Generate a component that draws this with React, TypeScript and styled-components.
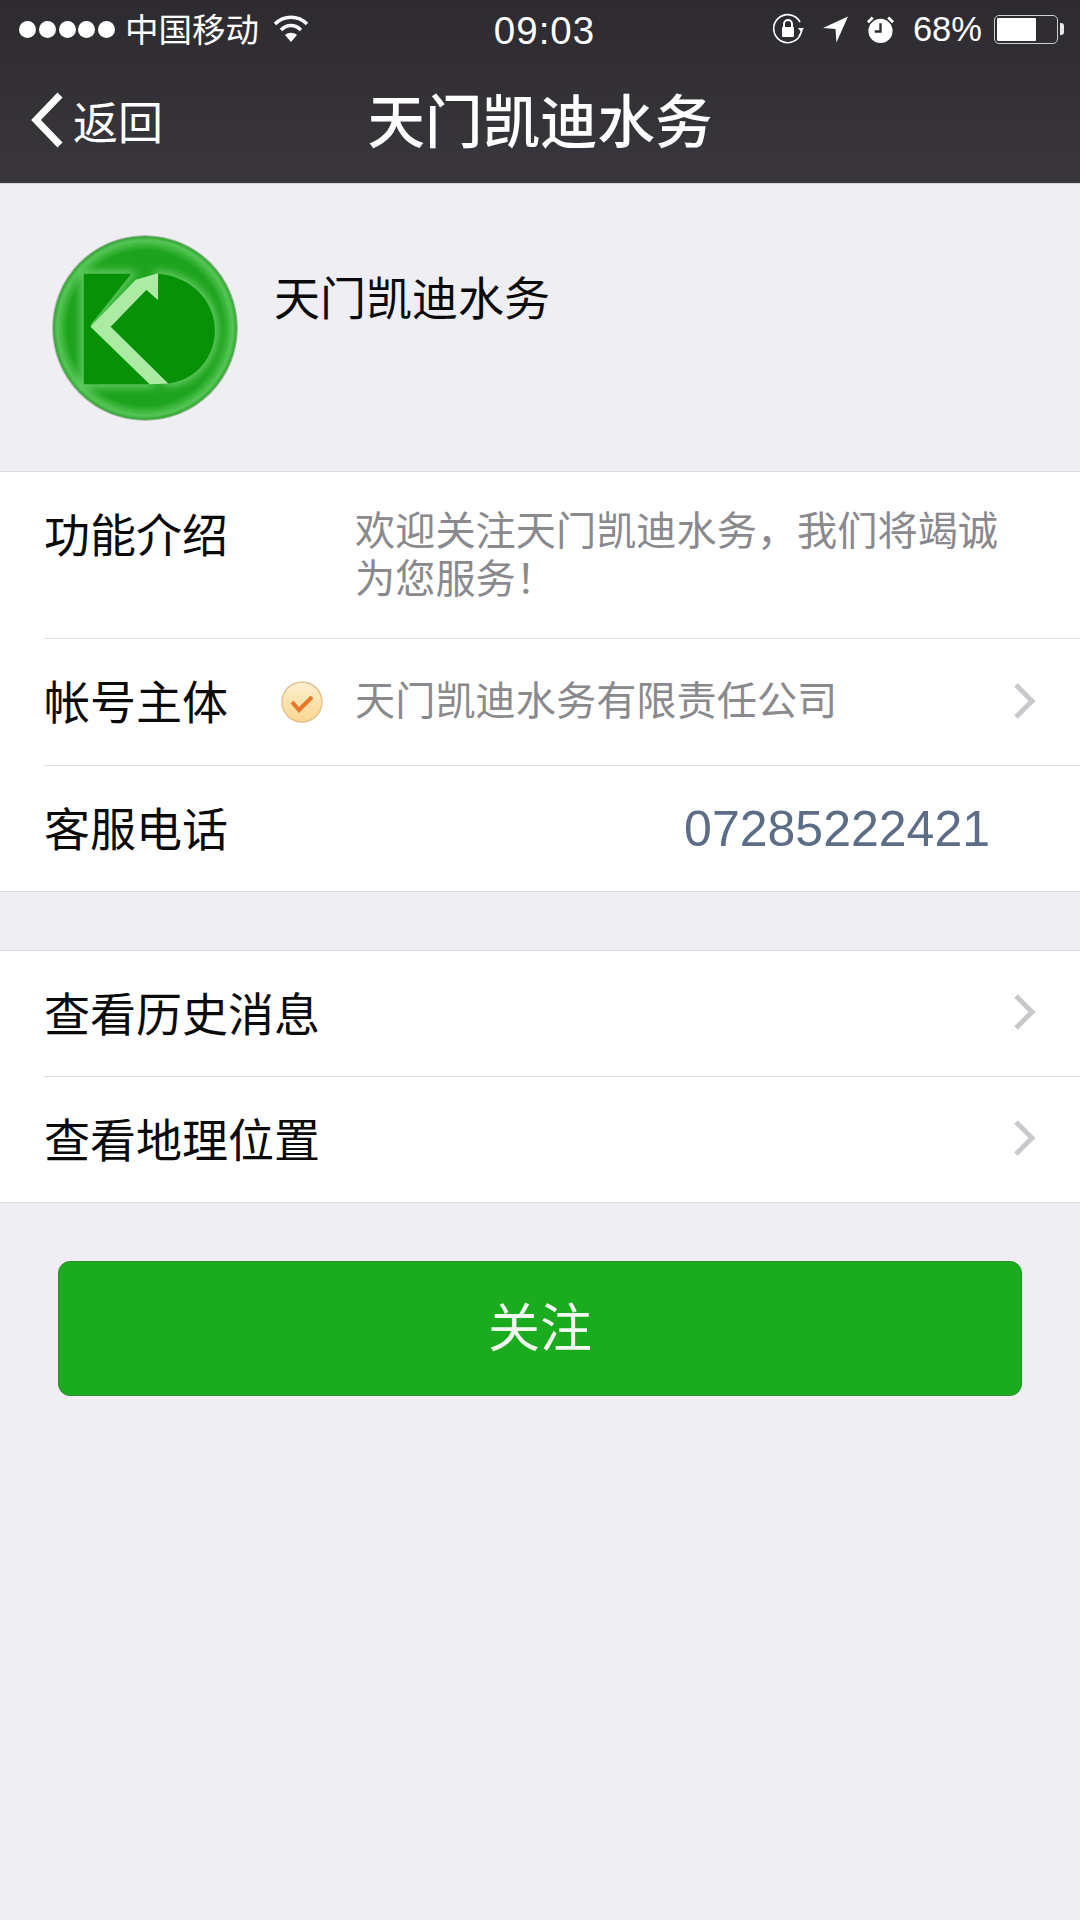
import React from 'react'
import styled, {createGlobalStyle} from 'styled-components'

const GlobalStyle = createGlobalStyle`
  html, body {
    margin: 0;
    padding: 0;
    background: #efeef2;
  }
  * {
    box-sizing: border-box;
  }
`
const Page = styled.div`
  width: 1080px;
  height: 1920px;
  overflow: hidden;
  background: #efeef2;
  font-family: "Liberation Sans", "Noto Sans CJK SC", sans-serif;
  color: #0a0a0a;
`
const Header = styled.header`
  height: 184px;
  background: linear-gradient(180deg, #2d2b2f 0%, #39373d 100%);
  color: #fff;
  border-bottom: 1px solid #d8d8dc;
`
const StatusBar = styled.div`
  display: grid;
  grid-template-columns: 1fr auto 1fr;
  align-items: center;
  height: 58px;
  padding: 0 22px 0 19px;
`
const StatusLeft = styled.div`
  display: flex;
  align-items: center;
`
const StatusRight = styled.div`
  display: flex;
  align-items: center;
  justify-content: flex-end;
  gap: 18px;
`
const Dots = styled.div`
  display: flex;
  gap: 2.75px;
  margin-right: 10px;

  > i {
    width: 17px;
    height: 17px;
    border-radius: 50%;
    background: #fff;
  }
`
const Carrier = styled.span`
  font-size: 33.5px;
  line-height: 40px;
  padding-top: 4px;
  margin-right: 14px;
`
const Clock = styled.span`
  padding-top: 4px;
  margin-left: 12px;
  font-size: 38.5px;
  letter-spacing: 1px;
`
const Percent = styled.span`
  font-size: 34.5px;
  margin-right: -6px;
`
const Battery = styled.div`
  position: relative;
  width: 64px;
  height: 29px;
  padding: 2px;
  border: 1.5px solid #cfcfd2;
  border-radius: 5px;

  &::after {
    content: "";
    position: absolute;
    top: 7px;
    right: -7px;
    width: 4px;
    height: 12px;
    border-radius: 0 3px 3px 0;
    background: #e8e8e8;
  }
`
const BatteryFill = styled.div`
  width: 68%;
  height: 100%;
  background: #fff;
  border-radius: 1px;
`
const NavBar = styled.div`
  display: grid;
  grid-template-columns: 1fr auto 1fr;
  align-items: center;
  height: 125px;
  padding: 6px 30px 0;
`
const Back = styled.div`
  display: flex;
  align-items: center;
  gap: 9px;
  padding-bottom: 7px;
  font-size: 45px;
`
const Title = styled.h1`
  margin: 0;
  font-size: 57.5px;
  font-weight: 500;
  line-height: 1;
`
const Profile = styled.section`
  display: flex;
  align-items: flex-start;
  height: 287px;
  padding: 51px 0 0 52px;
`
const Name = styled.div`
  margin: 34px 0 0 36px;
  font-size: 46px;
  line-height: 60px;
`
const Group = styled.section<{$top?: number}>`
  margin-top: ${p => p.$top || 0}px;
  background: #fff;
  border-top: 1px solid #dedee2;
  border-bottom: 1px solid #dcdce0;
`
const Row = styled.div<{$h: number}>`
  display: flex;
  align-items: center;
  height: ${p => p.$h}px;
  margin-left: 44px;
  padding-right: 44px;

  & + & {
    border-top: 1px solid #dedee2;
  }
`
const Label = styled.div<{$w?: number}>`
  width: ${p => p.$w ? p.$w + 'px' : 'auto'};
  flex-shrink: 0;
  padding-top: 2px;
  font-size: 46px;
  line-height: 60px;
`
const DescRow = styled(Row)`
  align-items: flex-start;
  padding-top: 32px;
  padding-right: 70px;
`
const Desc = styled.div`
  font-size: 40.2px;
  line-height: 48px;
  color: #8a8a8e;
  padding-top: 4px;
`
const Owner = styled.div`
  flex: 1;
  font-size: 40.2px;
  line-height: 60px;
  color: #8a8a8e;
`
const Badge = styled.svg`
  width: 44px;
  height: 44px;
  margin: 0 31px 0 -12px;
  flex-shrink: 0;
`
const Phone = styled.div`
  margin-left: auto;
  margin-right: 46px;
  font-size: 50px;
  color: #5d6d87;
`
const Chevron = styled.svg`
  width: 24px;
  height: 40px;
  margin: 0 0 3px auto;
  flex-shrink: 0;
`
const Follow = styled.button`
  display: block;
  width: 964px;
  height: 135px;
  margin: 58px 0 0 58px;
  padding: 0 0 8px;
  border: 1px solid #2a8f2a;
  border-radius: 12px;
  background: #1bab1e;
  color: #f2f9f0;
  font-family: inherit;
  font-size: 52px;
`

const Arrow: React.FC = () => (
    <Chevron viewBox="0 0 24 40">
        <path d="M4 4l16 16L4 36" fill="none" stroke="#c8c8cd" strokeWidth="5" />
    </Chevron>
)

const kShape = 'M163 192H305L183 345L360 522H163Z'
const dShape = 'M385 192C490 200 555 280 555 360C555 440 500 510 415 520L243 350L350 240L385 270Z'

const Logo: React.FC = () => (
    <svg width="186" height="186" viewBox="68 76 556 556">
        <defs>
            <radialGradient id="ball" cx="50%" cy="50%" r="50%">
                <stop offset="0%" stopColor="#1ea31e" />
                <stop offset="84%" stopColor="#1ea31e" />
                <stop offset="95%" stopColor="#55c655" />
                <stop offset="100%" stopColor="#2f9f2f" />
            </radialGradient>
            <filter id="glow" x="-20%" y="-20%" width="140%" height="140%">
                <feGaussianBlur stdDeviation="12" />
            </filter>
        </defs>
        <circle cx="346" cy="354" r="276" fill="url(#ball)" stroke="#9fb89f" strokeWidth="3" />
        <g filter="url(#glow)" fill="#8fe48f" stroke="#8fe48f" strokeWidth="18" opacity=".65">
            <path d={kShape} />
            <path d={dShape} />
        </g>
        <path d={kShape} fill="#069106" />
        <path d={dShape} fill="#069106" />
        <path d="M183 350L318 210L385 190L385 270L350 240L243 350L415 520L360 522Z" fill="#abeba4" />
    </svg>
)

export default function App() {
    return (
        <Page>
            <GlobalStyle />
            <Header>
                <StatusBar>
                    <StatusLeft>
                        <Dots><i /><i /><i /><i /><i /></Dots>
                        <Carrier>中国移动</Carrier>
                        <svg width="36" height="28" viewBox="0 0 36 28">
                            <path d="M2 9c9-9 23-9 32 0M8 15c6-6 14-6 20 0" fill="none" stroke="#fff" strokeWidth="3.5" />
                            <path d="M12 20c3.500-3 8.500-3 12 0l-6 7z" fill="#fff" />
                        </svg>
                    </StatusLeft>
                    <Clock>09:03</Clock>
                    <StatusRight>
                        <svg width="33" height="32" viewBox="0 0 33 32">
                            <path d="M29 20A14 14 0 1 1 28 9M30 17a14 14 0 0 1-3 6" fill="none" stroke="#fff" strokeWidth="1.6" />
                            <path d="M26 15h6l-3 4z" fill="#fff" />
                            <rect x="10" y="14" width="12" height="10" rx="1" fill="#fff" />
                            <path d="M12 14v-3a4 4 0 0 1 8 0v3" fill="none" stroke="#fff" strokeWidth="2" />
                        </svg>
                        <svg width="25" height="27" viewBox="0 0 26 27">
                            <path d="M0 12L26 0L14 27L13 13Z" fill="#fff" />
                        </svg>
                        <svg width="29" height="29" viewBox="0 0 30 29">
                            <circle cx="15" cy="16" r="12.500" fill="#fff" />
                            <path d="M15 8v8.500H9" fill="none" stroke="#2f2d31" strokeWidth="2.500" />
                            <path d="M2 7l5-5M28 7l-5-5" stroke="#fff" strokeWidth="3" />
                        </svg>
                        <Percent>68%</Percent>
                        <Battery><BatteryFill /></Battery>
                    </StatusRight>
                </StatusBar>
                <NavBar>
                    <Back>
                        <svg width="34" height="56" viewBox="0 0 34 56">
                            <path d="M30 3L6 28l24 25" fill="none" stroke="#fff" strokeWidth="7" />
                        </svg>
                        返回
                    </Back>
                    <Title>天门凯迪水务</Title>
                    <div />
                </NavBar>
            </Header>
            <Profile>
                <Logo />
                <Name>天门凯迪水务</Name>
            </Profile>
            <Group>
                <DescRow $h={166}>
                    <Label $w={311}>功能介绍</Label>
                    <Desc>欢迎关注天门凯迪水务，我们将竭诚<br />为您服务！</Desc>
                </DescRow>
                <Row $h={127}>
                    <Label $w={248}>帐号主体</Label>
                    <Badge viewBox="0 0 44 44">
                        <defs>
                            <linearGradient id="badge" x1="0" y1="0" x2="0" y2="1">
                                <stop offset="0%" stopColor="#fdf0cf" />
                                <stop offset="100%" stopColor="#f9d68f" />
                            </linearGradient>
                        </defs>
                        <circle cx="22" cy="22" r="20" fill="url(#badge)" stroke="#e3c48f" strokeWidth="1.500" />
                        <path d="M12 22l7 8 13-13" fill="none" stroke="#e8772a" strokeWidth="4" />
                    </Badge>
                    <Owner>天门凯迪水务有限责任公司</Owner>
                    <Arrow />
                </Row>
                <Row $h={126}>
                    <Label>客服电话</Label>
                    <Phone>07285222421</Phone>
                </Row>
            </Group>
            <Group $top={58}>
                <Row $h={125}>
                    <Label>查看历史消息</Label>
                    <Arrow />
                </Row>
                <Row $h={126}>
                    <Label>查看地理位置</Label>
                    <Arrow />
                </Row>
            </Group>
            <Follow>关注</Follow>
        </Page>
    )
}
